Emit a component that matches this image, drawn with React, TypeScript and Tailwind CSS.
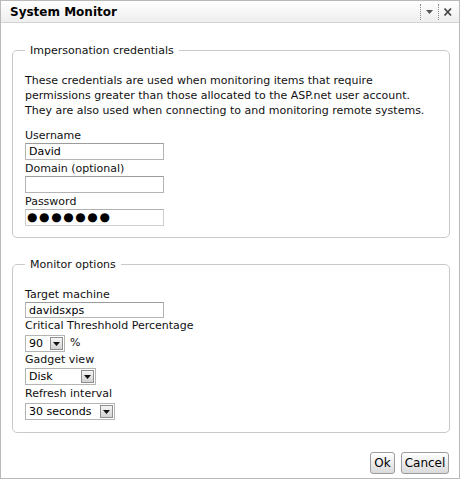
import React from 'react';

const font = { fontFamily: '"DejaVu Sans", "Liberation Sans", sans-serif' };

const TextBox = ({ value, h = 'h-[17px]' }: { value: string; h?: string }) => (
    <div className={`w-[139px] ${h} border border-[#b4b4b4] border-t-[#9c9c9c] bg-white pl-[3px] text-[11px] leading-[15px] text-black`}>
        {value}
    </div>
);

const SelectBox = ({ value, width }: { value: string; width: string }) => (
    <div className={`${width} h-[17px] flex items-center justify-between border border-[#b4b4b4] bg-white pl-[3px] pr-[1px]`}>
        <span className="text-[11px] leading-[15px] text-black whitespace-nowrap">{value}</span>
        <span className="w-[13px] h-[13px] flex items-center justify-center border border-[#8e8e8e] bg-gradient-to-b from-[#f6f6f6] to-[#d2d2d2]">
            <svg width="7" height="4" viewBox="0 0 7 4">
                <path d="M0 0 L7 0 L3.5 4 Z" fill="#111" />
            </svg>
        </span>
    </div>
);

const Label = ({ children, className = '' }: { children: React.ReactNode; className?: string }) => (
    <div className={`text-[11px] leading-[14px] text-[#111] ${className}`}>{children}</div>
);

export default function App() {
    return (
        <div className="w-[461px] h-[480px] bg-white" style={font}>
            <div className="w-[460px] h-[479px] border border-[#b9b9b9] bg-white flex flex-col">
                {/* title bar */}
                <div className="h-[22px] flex items-center justify-between border-b border-[#d4d4d4] bg-gradient-to-b from-[#ffffff] to-[#eeeeee] pl-[9px] pr-[5px]">
                    <span className="text-[12px] font-bold text-black">System Monitor</span>
                    <div className="flex items-center h-full">
                        <span className="h-[16px] border-l border-dotted border-[#8a8a8a]" />
                        <svg width="15" height="8" viewBox="0 0 15 8" className="mx-[1px]">
                            <path d="M4 2 L11 2 L7.5 6 Z" fill="#555" />
                        </svg>
                        <span className="h-[16px] border-l border-dotted border-[#8a8a8a]" />
                        <svg width="12" height="10" viewBox="0 0 12 10" className="ml-[3px]">
                            <path d="M2.5 1.5 L9 8.5 M9 1.5 L2.5 8.5" stroke="#444" strokeWidth="1.8" />
                        </svg>
                    </div>
                </div>

                <div className="pl-[11px]">
                    <fieldset className="mt-[20px] w-[438px] border border-[#c9c9c9] rounded-[5px] px-[12px] pb-[11px]">
                        <legend className="px-[5px] text-[11px] leading-[15px] text-[#111]">Impersonation credentials</legend>
                        <p className="mt-[15px] text-[11px] leading-[15px] text-[#111]">
                            These credentials are used when monitoring items that require
                            <br />
                            permissions greater than those allocated to the ASP.net user account.
                            <br />
                            They are also used when connecting to and monitoring remote systems.
                        </p>
                        <Label className="mt-[11px]">Username</Label>
                        <TextBox value="David" />
                        <Label className="mt-[2px]">Domain (optional)</Label>
                        <TextBox value="" />
                        <Label className="mt-[2px]">Password</Label>
                        <div className="w-[139px] h-[17px] border border-[#cfcfcf] border-t-[#b0b0b0] bg-white pl-[1px] text-[12px] leading-[15px] tracking-[1.6px] text-black">
                            ●●●●●●●
                        </div>
                    </fieldset>

                    <fieldset className="mt-[19px] w-[438px] border border-[#c9c9c9] rounded-[5px] px-[12px] pb-[12px]">
                        <legend className="px-[5px] text-[11px] leading-[15px] text-[#111]">Monitor options</legend>
                        <Label className="mt-[16px]">Target machine</Label>
                        <TextBox value="davidsxps" h="h-[16px]" />
                        <Label className="mt-[1px]">Critical Threshhold Percentage</Label>
                        <div className="mt-[2px] flex items-center gap-[5px]">
                            <SelectBox value="90" width="w-[40px]" />
                            <span className="text-[11px] text-[#111]">%</span>
                        </div>
                        <Label className="mt-[1px]">Gadget view</Label>
                        <div className="mt-[1px]">
                            <SelectBox value="Disk" width="w-[71px]" />
                        </div>
                        <Label className="mt-[2px]">Refresh interval</Label>
                        <div className="mt-[2px]">
                            <SelectBox value="30 seconds" width="w-[90px]" />
                        </div>
                    </fieldset>
                </div>

                <div className="mt-[19px] flex justify-end gap-[6px] pr-[10px]">
                    <button className="w-[25px] h-[22px] border border-[#9c9c9c] rounded-[3px] bg-gradient-to-b from-[#ffffff] to-[#dadada] text-[12px] text-black">
                        Ok
                    </button>
                    <button className="w-[48px] h-[22px] border border-[#9c9c9c] rounded-[3px] bg-gradient-to-b from-[#ffffff] to-[#dadada] text-[12px] text-black">
                        Cancel
                    </button>
                </div>
            </div>
        </div>
    );
}
